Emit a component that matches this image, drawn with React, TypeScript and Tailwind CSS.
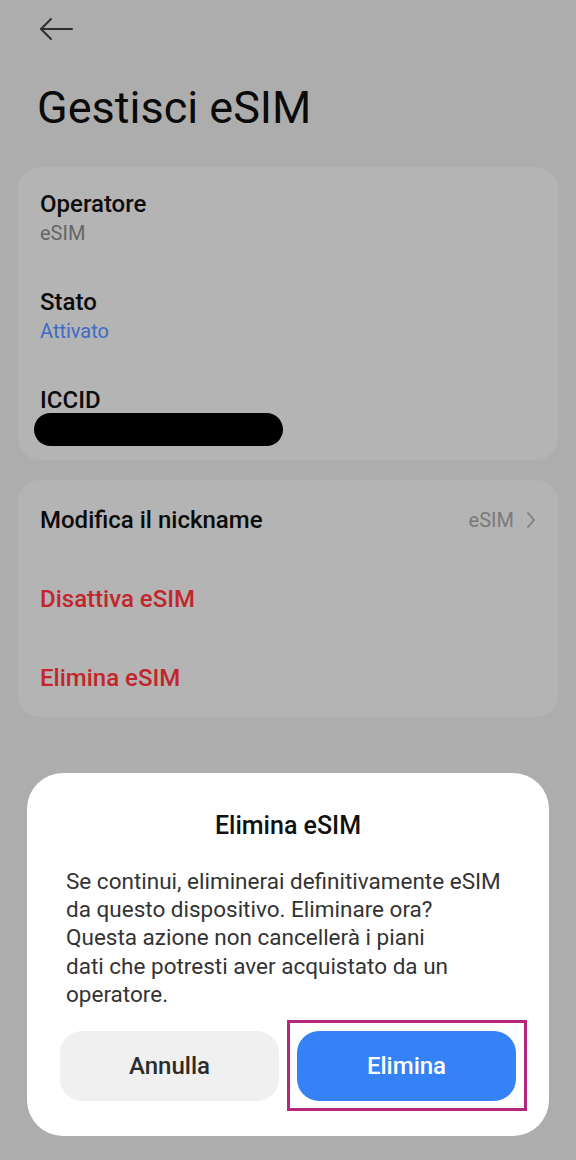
import React from "react";

function BackArrow() {
  return (
    <svg width="34" height="24" viewBox="0 0 34 24" fill="none" stroke="#2e2e2e" strokeWidth="2" strokeLinecap="round" strokeLinejoin="round">
      <path d="M2 12H33" />
      <path d="M12 2L2 12L12 22" />
    </svg>
  );
}

function Chevron() {
  return (
    <svg width="10" height="18" viewBox="0 0 10 18" fill="none" stroke="#7d7d7d" strokeWidth="1.8" strokeLinecap="round" strokeLinejoin="round">
      <path d="M2 2L8 9L2 16" />
    </svg>
  );
}

type InfoRowProps = {
  label: string;
  children: React.ReactNode;
};

function InfoRow({ label, children }: InfoRowProps) {
  return (
    <div className="flex flex-col">
      <p className="text-[24px] leading-[30px] font-medium text-[#0b0b0b]">{label}</p>
      <div className="mt-[1px]">{children}</div>
    </div>
  );
}

export default function App() {
  return (
    <div
      className="min-h-[1160px] w-[576px] bg-[#adadad] flex flex-col overflow-hidden"
      style={{ fontFamily: "Roboto, 'Noto Sans', sans-serif" }}
    >
      {/* Header */}
      <div className="h-[56px] flex items-center pl-[39px] pt-px">
        <BackArrow />
      </div>
      <h1 className="mt-[24px] pl-[37px] text-[45px] leading-[56px] font-normal text-[#0a0a0a]">Gestisci eSIM</h1>

      {/* Info card */}
      <div className="mt-[31px] mx-[18px] rounded-[22px] bg-[#b4b4b4] pl-[22px] pt-[22px] pb-[14px] flex flex-col gap-[41px]">
        <InfoRow label="Operatore">
          <p className="text-[20px] leading-[26px] text-[#666666]">eSIM</p>
        </InfoRow>
        <InfoRow label="Stato">
          <p className="text-[20px] leading-[26px] text-[#3c6cc4]">Attivato</p>
        </InfoRow>
        <div className="flex flex-col">
          <p className="text-[24px] leading-[30px] font-medium text-[#0b0b0b]">ICCID</p>
          <div className="-mt-[2px] -ml-[6px] h-[33px] w-[249px] rounded-full bg-black" />
        </div>
      </div>

      {/* Actions card */}
      <div className="mt-[20px] mx-[18px] rounded-[22px] bg-[#b4b4b4] flex flex-col">
        <div className="h-[79px] flex items-center justify-between pl-[22px] pr-[22px]">
          <span className="text-[24px] leading-[30px] font-medium text-[#0b0b0b]">Modifica il nickname</span>
          <span className="flex items-center gap-[12px]">
            <span className="text-[20px] leading-[26px] text-[#7a7a7a]">eSIM</span>
            <Chevron />
          </span>
        </div>
        <div className="h-[79px] flex items-center pl-[22px]">
          <span className="text-[24px] leading-[30px] font-medium text-[#c2262b]">Disattiva eSIM</span>
        </div>
        <div className="h-[79px] flex items-center pl-[22px]">
          <span className="text-[24px] leading-[30px] font-medium text-[#c2262b]">Elimina eSIM</span>
        </div>
      </div>

      {/* Dialog */}
      <div className="mt-[56px] mx-[27px] rounded-[36px] bg-white px-[33px] pt-[38px] pb-[35px] flex flex-col">
        <p className="text-center text-[25px] leading-[30px] font-medium text-[#111111]">Elimina eSIM</p>
        <p className="mt-[26px] pl-[6px] text-[22.5px] leading-[28.2px] text-[#333333]">
          Se continui, eliminerai definitivamente eSIM
          <br />
          da questo dispositivo. Eliminare ora?
          <br />
          Questa azione non cancellerà i piani
          <br />
          dati che potresti aver acquistato da un
          <br />
          operatore.
        </p>
        <div className="mt-[23px] flex gap-[18px]">
          <button className="flex-1 h-[70px] rounded-[22px] bg-[#f0f0f0] text-[24px] font-medium text-[#2c2c2c]">
            Annulla
          </button>
          <div className="relative flex-1">
            <button className="w-full h-[70px] rounded-[22px] bg-[#3482f6] text-[24px] font-medium text-white">
              Elimina
            </button>
            <div className="absolute -top-[11px] -bottom-[10px] -left-[10px] -right-[11px] border-[3px] border-[#b5277c] pointer-events-none" />
          </div>
        </div>
      </div>
    </div>
  );
}
